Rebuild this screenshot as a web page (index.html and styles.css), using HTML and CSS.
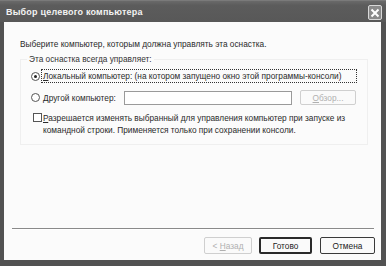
FILE: index.html
```html
<!DOCTYPE html>
<html lang="ru">
<head>
<meta charset="utf-8">
<link rel="stylesheet" href="styles.css">
</head>
<body>
<div class="window">
  <div class="titlebar">
    <span class="title">Выбор целевого компьютера</span>
    <span class="close"><svg width="10" height="10" viewBox="0 0 10 10"><path d="M1.5 1.5 L8.5 8.5 M8.5 1.5 L1.5 8.5" stroke="#fff" stroke-width="2" fill="none"/></svg></span>
  </div>
  <div class="frame">
    <div class="client">
      <div class="desc">Выберите компьютер, которым должна управлять эта оснастка.</div>
      <div class="group">
        <div class="legend">Эта оснастка всегда управляет:</div>
        <div class="row row1">
          <span class="radio checked"></span>
          <span class="focus"><span class="acc">Локальный компьютер: (на котором запущено окно этой программы-консоли)</span></span>
        </div>
        <div class="row row2">
          <span class="radio"></span>
          <span class="lbl acc">Другой компьютер:</span>
          <span class="input"></span>
          <span class="btn small disabled"><span class="acc">Обзор...</span></span>
        </div>
        <div class="row row3">
          <span class="check"></span>
          <span class="ctext acc">Разрешается изменять выбранный для управления компьютер при запуске из командной строки. Применяется только при сохранении консоли.</span>
        </div>
      </div>
      <div class="footer">
        <div class="sep"></div>
        <div class="buttons">
          <span class="btn disabled back">&lt;&nbsp;<u>Н</u>азад</span>
          <span class="btn default ok">Готово</span>
          <span class="btn cancel">Отмена</span>
        </div>
      </div>
    </div>
  </div>
</div>
</body>
</html>
```
FILE: styles.css
```css
* { box-sizing: border-box; }
html, body { margin: 0; padding: 0; background: #4a4a4a; }
body { font-family: "Liberation Sans", Arial, sans-serif; font-size: 8.3px; color: #2a2a2a; }
u { text-decoration: underline; }
.acc { display: inline-block; }
.acc::first-letter { text-decoration: underline; }

.window { width: 386px; height: 266px; display: flex; flex-direction: column; background: #555; }

.titlebar { height: 22px; display: flex; align-items: center; justify-content: space-between; padding: 0 4px 0 6px; background: linear-gradient(#6a6a6a, #5c5c5c 20%, #585858); border-top: 1px solid #7a7a7a; }
.title { color: #f2f2f2; font-weight: bold; font-size: 9px; letter-spacing: 0.2px; }
.close { width: 14px; height: 15px; margin-top: 2px; border: 1px solid #d8d8d8; border-radius: 2px; background: #8a8a8a; display: flex; align-items: center; justify-content: center; }

.frame { flex: 1; display: flex; padding: 0 5px 6px 4px; background: #525252; }
.client { flex: 1; background: #fbfbfb; display: flex; flex-direction: column; padding: 17px 0 0 0; }

.desc { margin-left: 16px; line-height: 11px; }

.group { margin: 9px 0 0 16px; width: 348px; height: 86px; border: 1px solid #efefef; padding: 0 0 0 10px; display: flex; flex-direction: column; }
.legend { align-self: flex-start; margin: -6px 0 0 -4px; padding: 0 2px; background: #fbfbfb; line-height: 11px; color: #333; }

.row { display: flex; align-items: center; }
.row1 { margin-top: 4px; height: 14px; }
.row2 { margin-top: 7px; height: 15px; }
.row3 { margin-top: 7px; align-items: flex-start; }

.radio { width: 9px; height: 9px; border: 1px solid #555; border-radius: 50%; background: #fff; display: flex; align-items: center; justify-content: center; flex: none; }
.radio.checked::after { content: ""; width: 3px; height: 3px; border-radius: 50%; background: #222; }

.focus { margin-left: 1px; width: 316px; height: 14px; border: 1px dotted #333; display: flex; align-items: center; padding-left: 1px; white-space: nowrap; }

.lbl { margin-left: 3px; width: 81px; }
.input { width: 168px; height: 14px; border: 1px solid #9a9a9a; background: #fff; }
.btn { display: flex; align-items: center; justify-content: center; border: 1px solid #3a3a3a; border-radius: 2px; background: #fafafa; color: #222; }
.btn.small { margin-left: 8px; width: 56px; height: 15px; }
.btn.disabled { border-color: #cfcfcf; color: #b0b0b0; }

.check { width: 9px; height: 9px; border: 1px solid #555; background: #fff; margin: 1px 0 0 2px; flex: none; }
.ctext { margin-left: 1px; width: 312px; line-height: 12px; }

.footer { margin-top: auto; }
.sep { margin: 0 7px 0 8px; height: 2px; border-top: 1px solid #8a8a8a; border-bottom: 1px solid #fff; }
.buttons { display: flex; justify-content: flex-end; padding: 7px 6px 6px 0; gap: 8px; }
.buttons .btn { height: 17px; }
.back { width: 48px; margin-right: -1px; }
.ok { width: 53px; border-width: 2px; border-color: #2a2a2a; }
.cancel { width: 55px; }
```
